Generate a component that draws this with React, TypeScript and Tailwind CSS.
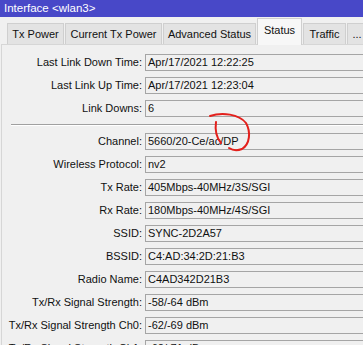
import React from "react";

const rowsTop = [
  { label: "Last Link Down Time:", value: "Apr/17/2021 12:22:25" },
  { label: "Last Link Up Time:", value: "Apr/17/2021 12:23:04" },
  { label: "Link Downs:", value: "6" },
];

const rowsBottom = [
  { label: "Channel:", value: "5660/20-Ce/ac/DP" },
  { label: "Wireless Protocol:", value: "nv2" },
  { label: "Tx Rate:", value: "405Mbps-40MHz/3S/SGI" },
  { label: "Rx Rate:", value: "180Mbps-40MHz/4S/SGI" },
  { label: "SSID:", value: "SYNC-2D2A57" },
  { label: "BSSID:", value: "C4:AD:34:2D:21:B3" },
  { label: "Radio Name:", value: "C4AD342D21B3" },
  { label: "Tx/Rx Signal Strength:", value: "-58/-64 dBm" },
  { label: "Tx/Rx Signal Strength Ch0:", value: "-62/-69 dBm" },
  { label: "Tx/Rx Signal Strength Ch1:", value: "-62/-71 dBm" },
];

const tabs = [
  { name: "Tx Power", w: "w-[57px]" },
  { name: "Current Tx Power", w: "w-[97px]" },
  { name: "Advanced Status", w: "w-[93px]" },
  { name: "Status", w: "w-[45px]", active: true },
  { name: "Traffic", w: "w-[43px]" },
  { name: "...", w: "w-[20px]" },
];

function Row({ label, value }: { label: string; value: string }) {
  return (
    <div className="flex h-[17px] items-center">
      <div className="w-[141px] shrink-0 text-right pr-[1px] whitespace-nowrap">{label}</div>
      <div className="ml-[2px] flex h-[17px] w-[230px] shrink-0 items-center border border-[#a5a5a5] bg-[#f0f0f0] pl-[2px] whitespace-nowrap">
        {value}
      </div>
    </div>
  );
}

export default function App() {
  return (
    <div
      className="relative h-[345px] w-[363px] overflow-hidden bg-[#f0f0f0] text-[11px] text-[#111]"
      style={{ fontFamily: '"Liberation Sans", Arial, sans-serif' }}
    >
      {/* window title */}
      <div className="flex h-[17px] items-center bg-[#4848c8] pl-[4px] text-[11.5px] text-white">
        Interface &lt;wlan3&gt;
      </div>

      {/* tabs */}
      <div className="flex h-[27px] items-end gap-[1px] pl-[7px]">
        {tabs.map((t) =>
          t.active ? (
            <div
              key={t.name}
              className={`${t.w} -mb-[1px] flex h-[27px] shrink-0 items-center justify-center border border-b-0 border-[#cfcfcf] bg-[#f7f7f7] pb-[3px]`}
            >
              {t.name}
            </div>
          ) : (
            <div
              key={t.name}
              className={`${t.w} flex h-[21px] shrink-0 items-center justify-center border border-b-0 border-[#cfcfcf] bg-[#e3e3e3] whitespace-nowrap`}
            >
              {t.name}
            </div>
          )
        )}
      </div>

      {/* panel */}
      <div className="ml-[1px] border-l border-t border-[#d6d6d6] bg-[#f0f0f0] pt-[9px]">
        <div className="flex flex-col gap-[6px]">
          {rowsTop.map((r) => (
            <Row key={r.label} {...r} />
          ))}
          <div className="ml-[9px] mt-[1px] mb-[1px] h-[2px] border-t border-b border-t-[#a0a0a0] border-b-white" />
          {rowsBottom.map((r) => (
            <Row key={r.label} {...r} />
          ))}
        </div>
      </div>

      {/* red marker annotation */}
      <svg className="pointer-events-none absolute left-0 top-0" width="363" height="345">
        <path
          d="M210 116 C222 112 239 114 246 123 C251 132 250 144 242 149 C237 151 232 150 229 148"
          fill="none"
          stroke="#e3201c"
          strokeWidth="2"
          strokeLinecap="round"
        />
        <path
          d="M216 122 C215 129 216 137 221 143"
          fill="none"
          stroke="#e3201c"
          strokeWidth="2"
          strokeLinecap="round"
        />
      </svg>
    </div>
  );
}
